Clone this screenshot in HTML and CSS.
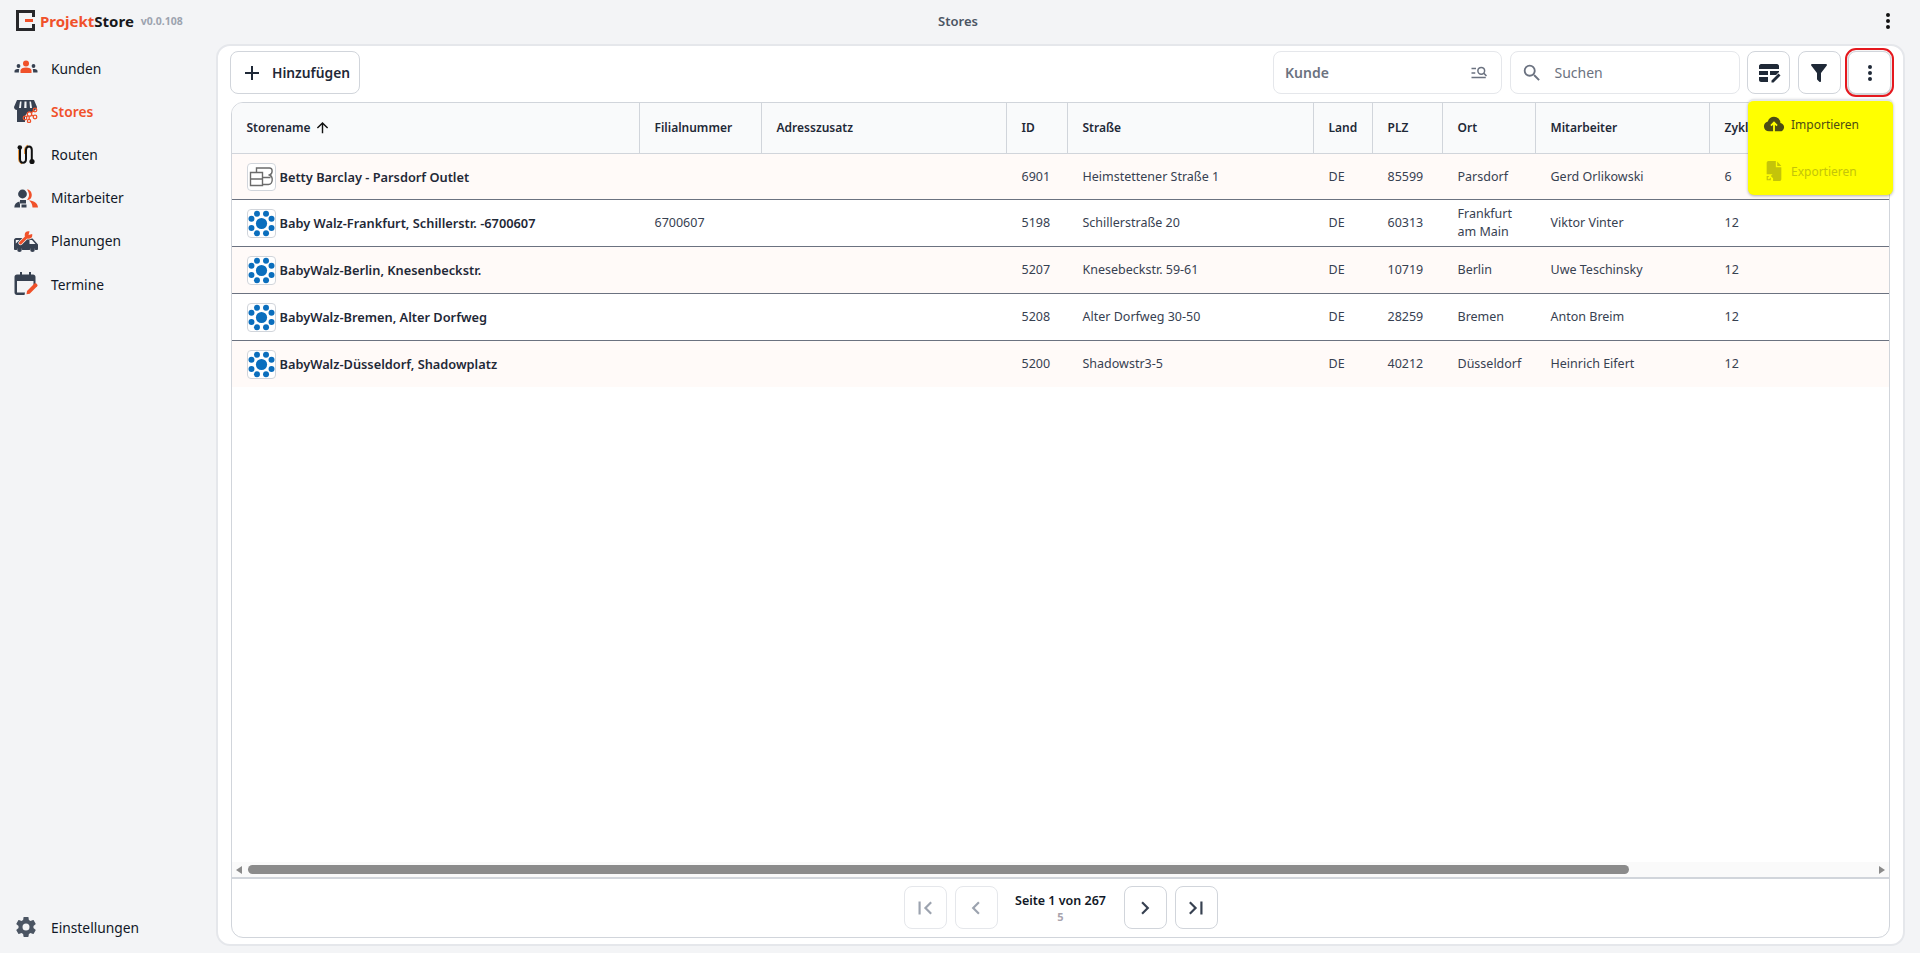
FILE: index.html
```html
<!DOCTYPE html>
<html lang="de">
<head>
    <meta charset="UTF-8" />
    <title>Stores</title>
    <link rel="stylesheet" href="styles.css">
</head>
<body>

<!-- ===== TOP BAR ===== -->
<header class="topbar">
    <div class="brand">
        <svg class="brand-logo" viewBox="0 0 19 21">
            <path fill="#27272a" d="M0 0H19V7H16V3H3V18H16V14H19V21H0Z"/>
            <rect fill="#f0512a" x="9" y="9" width="8" height="3"/>
        </svg>
        <span class="brand-name"><span class="accent">Projekt</span>Store</span>
        <span class="brand-version">v0.0.108</span>
    </div>
    <div class="topbar-title">Stores</div>
    <button class="topbar-menu" aria-label="Menü">
        <svg class="icon-md" viewBox="0 0 24 24"><path d="M12,16A2,2 0 0,1 14,18A2,2 0 0,1 12,20A2,2 0 0,1 10,18A2,2 0 0,1 12,16M12,10A2,2 0 0,1 14,12A2,2 0 0,1 12,14A2,2 0 0,1 10,12A2,2 0 0,1 12,10M12,4A2,2 0 0,1 14,6A2,2 0 0,1 12,8A2,2 0 0,1 10,6A2,2 0 0,1 12,4Z"/></svg>
    </button>
</header>

<div class="shell">
    <!-- ===== SIDEBAR ===== -->
    <aside class="sidebar">
        <a class="side-link">
            <svg class="side-icon" viewBox="0 0 24 24">
                <circle cx="12" cy="7.5" r="3" fill="#f0512a"/>
                <path fill="#f0512a" d="M6.5 17V14.5C6.5 12.5 9 11.5 12 11.5S17.5 12.5 17.5 14.5V17Z"/>
                <g fill="#374151">
                    <circle cx="4.5" cy="10" r="1.9"/>
                    <path d="M.5 16.5V15C.5 13.6 2.5 13 4.5 13L5.3 13.2C5 13.8 4.9 14.4 4.9 15V16.5Z"/>
                    <circle cx="19.5" cy="10" r="1.9"/>
                    <path d="M23.5 16.5V15C23.5 13.6 21.5 13 19.5 13L18.7 13.2C19 13.8 19.1 14.4 19.1 15V16.5Z"/>
                </g>
            </svg>
            <span>Kunden</span>
        </a>
        <a class="side-link active">
            <svg class="side-icon" viewBox="0 0 24 24">
                <path fill="#374151" d="M3 1H20L23 8C23 10 21.5 11 20.5 11V13H14L11 17V23H3V11C1.5 11 0 10 0 8Z"/>
                <path fill="#f3f4f6" d="M6 2.5H7.5L7 9H5ZM10.5 2.5H12.5V9H10.2ZM15.5 2.5H17L18 9H16Z"/>
                <g fill="none" stroke="#f0512a" stroke-width="1.3">
                    <circle cx="21" cy="11" r="1.8"/>
                    <circle cx="15.5" cy="15" r="2.2"/>
                    <circle cx="21" cy="18" r="1.8"/>
                    <circle cx="11" cy="19" r="1.8"/>
                    <circle cx="15" cy="22" r="1.6"/>
                    <path d="M17.2 13.8 19.6 12M17.5 16 19.5 17.2M13.7 16.7 12.2 18M15.2 17.2V20.4"/>
                </g>
            </svg>
            <span>Stores</span>
        </a>
        <a class="side-link">
            <svg class="side-icon" viewBox="0 0 24 24">
                <path fill="none" stroke="#f0912a" stroke-width="1" d="M4.6 8V17C4.6 19.5 6 21.5 8 21.8M10.6 12V8C10.6 5.5 12 3.5 14 3.2"/>
                <path fill="none" stroke="#111" stroke-width="2" d="M6 5V17C6 19.5 7.5 20.8 9 20.8S12 19.5 12 17V8C12 6 13 4.5 15 4.5S17.8 6 17.8 8V19"/>
                <circle cx="5.8" cy="5.5" r="2.3" fill="#111"/>
                <circle cx="18" cy="19.5" r="2.6" fill="#111"/>
            </svg>
            <span>Routen</span>
        </a>
        <a class="side-link">
            <svg class="side-icon" viewBox="0 0 24 24">
                <path fill="#f0512a" d="M13 3.5C16 3.5 17.8 6 17.8 9S16 14 13 14C14.5 12 15 10.5 15 9S14.5 5.5 13 3.5Z"/>
                <path fill="#f0512a" d="M15 14.5C19 14.5 24 17 24 21.5H18.5C18.5 19 17.5 16.5 15 14.5Z"/>
                <circle cx="8.5" cy="8" r="4.4" fill="#374151"/>
                <path fill="#374151" d="M6 14H12V17.5H6Z"/>
                <path fill="#374151" d="M7.5 18.5H12.5V21.5H7.5Z"/>
                <path fill="#374151" d="M5.5 15.5C2.5 16 .3 18 .3 21.5H6V18.5Z"/>
            </svg>
            <span>Mitarbeiter</span>
        </a>
        <a class="side-link">
            <svg class="side-icon" viewBox="0 0 24 24">
                <path fill="#374151" d="M2 9H17C18 9 18.5 9.5 19 10L24 15.5V20C24 20.5 23.5 21 23 21H21.3A3 3 0 0 0 15.7 21H8.3A3 3 0 0 0 2.7 21H1C.5 21 0 20.5 0 20V11C0 10 1 9 2 9Z"/>
                <path fill="#f3f4f6" d="M1.8 11H5.5L1.8 14.5ZM15.5 11H18L21.5 15H15.5Z"/>
                <circle cx="5.5" cy="20.8" r="2.3" fill="#374151"/>
                <circle cx="18.5" cy="20.8" r="2.3" fill="#374151"/>
                <path stroke="#f3f4f6" stroke-width="4.4" stroke-linecap="round" d="M6.5 14 12.5 8"/>
                <circle cx="14.5" cy="6" r="4.6" fill="#f3f4f6"/>
                <path stroke="#f0512a" stroke-width="3" stroke-linecap="round" d="M6.5 14 12.5 8"/>
                <circle cx="14.5" cy="6" r="3.8" fill="#f0512a"/>
                <path fill="#f3f4f6" d="M14.5 6 16 .8 20 4.5Z"/>
            </svg>
            <span>Planungen</span>
        </a>
        <a class="side-link">
            <svg class="side-icon" viewBox="0 0 24 24">
                <path fill="#374151" d="M6 0H8V2.5H15V0H17V2.5H19C20.5 2.5 21.5 3.5 21.5 5V14L19.5 16V9H3V20.5H11L10.5 23H3C1.5 23 .5 22 .5 20.5V5C.5 3.5 1.5 2.5 3 2.5H6Z"/>
                <path fill="#f0512a" d="M13 19 20.5 11.5C21 11 21.7 11 22.2 11.5L23.2 12.5C23.7 13 23.7 13.7 23.2 14.2L15.7 21.7 12.5 22.3Z"/>
            </svg>
            <span>Termine</span>
        </a>
        <a class="side-link side-bottom">
            <svg class="side-icon" viewBox="0 0 24 24"><path fill="#4b5563" d="M12,15.5A3.5,3.5 0 0,1 8.5,12A3.5,3.5 0 0,1 12,8.5A3.5,3.5 0 0,1 15.5,12A3.5,3.5 0 0,1 12,15.5M19.43,12.97C19.47,12.65 19.5,12.33 19.5,12C19.5,11.67 19.47,11.34 19.43,11L21.54,9.37C21.73,9.22 21.78,8.95 21.66,8.73L19.66,5.27C19.54,5.05 19.27,4.96 19.05,5.05L16.56,6.05C16.04,5.66 15.5,5.32 14.87,5.07L14.5,2.42C14.46,2.18 14.25,2 14,2H10C9.75,2 9.54,2.18 9.5,2.42L9.13,5.07C8.5,5.32 7.96,5.66 7.44,6.05L4.95,5.05C4.73,4.96 4.46,5.05 4.34,5.27L2.34,8.73C2.21,8.95 2.27,9.22 2.46,9.37L4.57,11C4.53,11.34 4.5,11.67 4.5,12C4.5,12.33 4.53,12.65 4.57,12.97L2.46,14.63C2.27,14.78 2.21,15.05 2.34,15.27L4.34,18.73C4.46,18.95 4.73,19.03 4.95,18.95L7.44,17.94C7.96,18.34 8.5,18.68 9.13,18.93L9.5,21.58C9.54,21.82 9.75,22 10,22H14C14.25,22 14.46,21.82 14.5,21.58L14.87,18.93C15.5,18.67 16.04,18.34 16.56,17.94L19.05,18.95C19.27,19.03 19.54,18.95 19.66,18.73L21.66,15.27C21.78,15.05 21.73,14.78 21.54,14.63L19.43,12.97Z"/></svg>
            <span>Einstellungen</span>
        </a>
    </aside>

    <!-- ===== MAIN CARD ===== -->
    <main class="card">
        <div class="toolbar">
            <button class="btn btn-add">
                <svg class="icon-md" viewBox="0 0 24 24"><path d="M19,13H13V19H11V13H5V11H11V5H13V11H19V13Z"/></svg>
                Hinzufügen
            </button>
            <div class="toolbar-right">
                <div class="field field-customer">
                    <span class="field-label">Kunde</span>
                    <svg class="icon-field" viewBox="0 0 24 24">
                        <path fill="none" stroke="#6b7280" stroke-width="2" d="M2 6H8M2 12H7M2 18H21"/>
                        <circle cx="15" cy="9" r="4.5" fill="none" stroke="#6b7280" stroke-width="2"/>
                        <path stroke="#6b7280" stroke-width="2" d="M18.2 12.2 22 16"/>
                    </svg>
                </div>
                <div class="field field-search">
                    <svg class="icon-search" viewBox="0 0 24 24"><path d="M9.5,3A6.5,6.5 0 0,1 16,9.5C16,11.11 15.41,12.59 14.44,13.73L14.71,14H15.5L20.5,19L19,20.5L14,15.5V14.71L13.73,14.44C12.59,15.41 11.11,16 9.5,16A6.5,6.5 0 0,1 3,9.5A6.5,6.5 0 0,1 9.5,3M9.5,5C7,5 5,7 5,9.5C5,12 7,14 9.5,14C12,14 14,12 14,9.5C14,7 12,5 9.5,5Z"/></svg>
                    <span class="field-label">Suchen</span>
                </div>
                <button class="btn btn-icon" aria-label="Spalten">
                    <svg class="icon-md" viewBox="0 0 24 24"><path d="M4 3H20C21 3 22 4 22 5V8H2V5C2 4 3 3 4 3ZM2 10H11V14H2ZM13 10H22V11L19 14H13ZM2 16H11V21H4C3 21 2 20 2 19ZM21.5 12.5 23.5 14.5 16.5 21.5H14.5V19.5Z"/></svg>
                </button>
                <button class="btn btn-icon" aria-label="Filter">
                    <svg class="icon-md" viewBox="0 0 24 24"><path d="M14,12V19.88C14.04,20.18 13.94,20.5 13.71,20.71C13.32,21.1 12.69,21.1 12.3,20.71L10.29,18.7C10.06,18.47 9.96,18.16 10,17.87V12H9.97L4.21,4.62C3.87,4.19 3.95,3.56 4.38,3.22C4.57,3.08 4.78,3 5,3V3H19V3C19.22,3 19.43,3.08 19.62,3.22C20.05,3.56 20.13,4.19 19.79,4.62L14.03,12H14Z"/></svg>
                </button>
                <button class="btn btn-icon btn-marked" aria-label="Mehr">
                    <svg class="icon-md" viewBox="0 0 24 24"><path d="M12,16A2,2 0 0,1 14,18A2,2 0 0,1 12,20A2,2 0 0,1 10,18A2,2 0 0,1 12,16M12,10A2,2 0 0,1 14,12A2,2 0 0,1 12,14A2,2 0 0,1 10,12A2,2 0 0,1 12,10M12,4A2,2 0 0,1 14,6A2,2 0 0,1 12,8A2,2 0 0,1 10,6A2,2 0 0,1 12,4Z"/></svg>
                </button>
            </div>

            <!-- dropdown of the three dots button -->
            <div class="menu">
                <div class="menu-item">
                    <svg class="icon-menu" viewBox="0 0 24 24"><path d="M11 20H6.5Q4.22 20 2.61 18.43 1 16.85 1 14.58 1 12.63 2.17 11.1 3.35 9.57 5.25 9.15 5.88 6.85 7.75 5.43 9.63 4 12 4 14.93 4 16.96 6.04 19 8.07 19 11 20.73 11.2 21.86 12.5 23 13.78 23 15.5 23 17.38 21.69 18.69 20.38 20 18.5 20H13V12.85L14.6 14.4L16 13L12 9L8 13L9.4 14.4L11 12.85Z"/></svg>
                    <span>Importieren</span>
                </div>
                <div class="menu-item disabled">
                    <svg class="icon-menu" viewBox="0 0 24 24"><path d="M6 1H14V8H20V21C20 22 19 23 18 23H11V20L8.5 17.5 10.5 15.5H4V3C4 2 5 1 6 1ZM15.5 1.5 20 6.5H15.5ZM4 17.5H7L4.8 19.7 6.3 21.2 8.5 19V22H4Z"/></svg>
                    <span>Exportieren</span>
                </div>
            </div>
        </div>

        <div class="table-box">
            <div class="table-scroll">
                <table class="stores">
                    <colgroup>
                        <col class="c-name"><col class="c-branch"><col class="c-extra"><col class="c-id"><col class="c-street">
                        <col class="c-land"><col class="c-zip"><col class="c-city"><col class="c-staff"><col class="c-cycle">
                    </colgroup>
                    <thead>
                    <tr>
                        <th>
                            <span class="sort">Storename
                                <svg class="icon-sort" viewBox="0 0 24 24"><path d="M13,20H11V8L5.5,13.5L4.08,12.08L12,4.16L19.92,12.08L18.5,13.5L13,8V20Z"/></svg>
                            </span>
                        </th>
                        <th>Filialnummer</th><th>Adresszusatz</th><th>ID</th><th>Straße</th>
                        <th>Land</th><th>PLZ</th><th>Ort</th><th>Mitarbeiter</th><th>Zyklus</th>
                    </tr>
                    </thead>
                    <tbody>
                    <tr class="first">
                        <td class="store">
                            <span class="store-cell">
                                <span class="logo logo-short">
                                    <svg viewBox="0 0 27 26"><g fill="none" stroke="#6b6b6b" stroke-width="1.4"><path d="M2.5 8.5H14.5V21.5H2.5ZM2.5 15H14.5"/><path d="M8.5 8.5V4H21.5C25 4 25 9.5 21.5 11 25.5 12.5 25 20.5 20.5 20.5H14.5M14.5 13.5H22.5"/></g></svg>
                                </span>
                                Betty Barclay - Parsdorf Outlet
                            </span>
                        </td>
                        <td></td><td></td><td>6901</td><td>Heimstettener Straße 1</td><td>DE</td><td>85599</td><td>Parsdorf</td><td>Gerd Orlikowski</td><td>6</td>
                    </tr>
                    <tr>
                        <td class="store"><span class="store-cell"><span class="logo"><svg viewBox="0 0 28 28"><use href="#walz"/></svg></span>Baby Walz-Frankfurt, Schillerstr. -6700607</span></td>
                        <td>6700607</td><td></td><td>5198</td><td>Schillerstraße 20</td><td>DE</td><td>60313</td><td>Frankfurt am Main</td><td>Viktor Vinter</td><td>12</td>
                    </tr>
                    <tr>
                        <td class="store"><span class="store-cell"><span class="logo"><svg viewBox="0 0 28 28"><use href="#walz"/></svg></span>BabyWalz-Berlin, Knesenbeckstr.</span></td>
                        <td></td><td></td><td>5207</td><td>Knesebeckstr. 59-61</td><td>DE</td><td>10719</td><td>Berlin</td><td>Uwe Teschinsky</td><td>12</td>
                    </tr>
                    <tr>
                        <td class="store"><span class="store-cell"><span class="logo"><svg viewBox="0 0 28 28"><use href="#walz"/></svg></span>BabyWalz-Bremen, Alter Dorfweg</span></td>
                        <td></td><td></td><td>5208</td><td>Alter Dorfweg 30-50</td><td>DE</td><td>28259</td><td>Bremen</td><td>Anton Breim</td><td>12</td>
                    </tr>
                    <tr class="last">
                        <td class="store"><span class="store-cell"><span class="logo"><svg viewBox="0 0 28 28"><use href="#walz"/></svg></span>BabyWalz-Düsseldorf, Shadowplatz</span></td>
                        <td></td><td></td><td>5200</td><td>Shadowstr3-5</td><td>DE</td><td>40212</td><td>Düsseldorf</td><td>Heinrich Eifert</td><td>12</td>
                    </tr>
                    </tbody>
                </table>
            </div>

            <!-- horizontal scrollbar -->
            <div class="hbar">
                <span class="hbar-arrow left"></span>
                <div class="hbar-track"><div class="hbar-thumb"></div></div>
                <span class="hbar-arrow right"></span>
            </div>

            <div class="pager">
                <button class="btn btn-page" disabled aria-label="Erste Seite">
                    <svg class="icon-page" viewBox="0 0 24 24"><path d="M18.41,16.59L13.82,12L18.41,7.41L17,6L11,12L17,18L18.41,16.59M6,6H8V18H6V6Z"/></svg>
                </button>
                <button class="btn btn-page" disabled aria-label="Zurück">
                    <svg class="icon-page" viewBox="0 0 24 24"><path d="M15.41,16.58L10.83,12L15.41,7.41L14,6L8,12L14,18L15.41,16.58Z"/></svg>
                </button>
                <div class="pager-info">
                    <div class="pager-text">Seite 1 von 267</div>
                    <div class="pager-count">5</div>
                </div>
                <button class="btn btn-page" aria-label="Weiter">
                    <svg class="icon-page" viewBox="0 0 24 24"><path d="M8.59,16.58L13.17,12L8.59,7.41L10,6L16,12L10,18L8.59,16.58Z"/></svg>
                </button>
                <button class="btn btn-page" aria-label="Letzte Seite">
                    <svg class="icon-page" viewBox="0 0 24 24"><path d="M5.59,7.41L10.18,12L5.59,16.59L7,18L13,12L7,6L5.59,7.41M16,6H18V18H16V6Z"/></svg>
                </button>
            </div>
        </div>
    </main>
</div>

<!-- shared logo -->
<svg class="defs" aria-hidden="true">
    <symbol id="walz" viewBox="0 0 28 28">
        <g fill="#0a6ebd">
            <circle cx="14" cy="14" r="5.8"/>
            <circle cx="9.3" cy="3.8" r="3.1"/><circle cx="18.7" cy="3.8" r="3.1"/>
            <circle cx="3.6" cy="9" r="3.1"/><circle cx="24.4" cy="9" r="3.1"/>
            <circle cx="3.6" cy="18.6" r="3.1"/><circle cx="24.4" cy="18.6" r="3.1"/>
            <circle cx="9.3" cy="24.2" r="3.1"/><circle cx="18.7" cy="24.2" r="3.1"/>
        </g>
    </symbol>
</svg>

</body>
</html>
```

FILE: styles.css
```css
* { box-sizing: border-box; }

html, body {
    height: 100%;
}
body {
    margin: 0;
    display: flex;
    flex-direction: column;
    overflow: hidden;
    background: #f3f4f6;
    color: #111827;
    font-family: "Noto Sans", "Open Sans", sans-serif;
    font-size: 13px;
}
svg { display: block; fill: currentColor; }
.defs { width: 0; height: 0; position: absolute; }

/* ────────── Top bar ────────── */
.topbar {
    height: 44px;
    flex: none;
    display: grid;
    grid-template-columns: 1fr auto 1fr;
    align-items: center;
    padding: 0 20px 3px 16px;
}
.brand {
    display: flex;
    align-items: center;
}
.brand-logo { width: 19px; height: 21px; margin-right: 5px; }
.brand-name {
    font-size: 15px;
    font-weight: 700;
    color: #18181b;
}
.brand-name .accent { color: #f0512a; }
.brand-version {
    margin-left: 7px;
    font-size: 10.5px;
    font-weight: 700;
    color: #9ca3af;
}
.topbar-title {
    font-size: 13px;
    font-weight: 600;
    color: #4b5563;
}
.topbar-menu {
    justify-self: end;
    border: none;
    background: none;
    padding: 0;
    color: #111;
}
.icon-md { width: 24px; height: 24px; }

/* ────────── Layout ────────── */
.shell {
    flex: 1;
    min-height: 0;
    display: flex;
}
.sidebar {
    width: 216px;
    flex: none;
    display: flex;
    flex-direction: column;
    padding: 2.5px 0 4px 14px;
}
.side-link {
    height: 43.2px;
    flex: none;
    display: flex;
    align-items: center;
    gap: 13px;
    font-size: 13.8px;
    color: #111827;
}
.side-link.active {
    color: #f0512a;
    font-weight: 600;
}
.side-bottom { margin-top: auto; }
.side-icon { width: 24px; height: 24px; flex: none; }

.card {
    width: 1689px;
    flex: none;
    min-height: 0;
    margin-bottom: 7px;
    display: flex;
    flex-direction: column;
    gap: 8px;
    padding: 5px 13px 6px;
    background: #fff;
    border: 2px solid #e5e7eb;
    border-radius: 14px;
}

/* ────────── Toolbar ────────── */
.toolbar {
    position: relative;
    flex: none;
    height: 43px;
    display: flex;
    justify-content: space-between;
    margin: 0 -1px;
}
.toolbar-right {
    display: flex;
    gap: 7.5px;
}
.btn {
    display: flex;
    align-items: center;
    justify-content: center;
    background: #fff;
    border: 1px solid #d1d5db;
    border-radius: 8px;
    color: #1f2937;
    font-family: inherit;
    padding: 0;
}
.btn-add {
    width: 130px;
    gap: 8px;
    font-size: 13.8px;
    font-weight: 600;
}
.btn-icon { width: 43px; height: 43px; }
.btn-marked {
    outline: 2px solid #e5181e;
    outline-offset: 1px;
    box-shadow: 0 1px 3px rgba(0,0,0,.25);
}
.field {
    display: flex;
    align-items: center;
    height: 43px;
    border: 1px solid #e5e7eb;
    border-radius: 8px;
    background: #fff;
    font-size: 14px;
    color: #6b7280;
}
.field-customer {
    width: 229px;
    justify-content: space-between;
    padding: 0 13px 0 11px;
    font-weight: 600;
}
.field-search {
    width: 230px;
    gap: 12px;
    padding-left: 10px;
}
.icon-field { width: 18px; height: 18px; }
.icon-search { width: 22px; height: 22px; color: #6b7280; }

.menu {
    position: absolute;
    top: 48px;
    right: -2px;
    z-index: 10;
    width: 145px;
    background: #ff0;
    border-top: 2px solid #e5e7eb;
    border-radius: 6px;
    box-shadow: 0 1px 3px rgba(0,0,0,.3);
}
.menu-item {
    height: 47px;
    display: flex;
    align-items: center;
    gap: 6px;
    padding: 0 0 1px 15px;
    font-size: 12px;
    color: #4d4d14;
}
.menu-item.disabled { color: #c4c40a; }
.icon-menu { width: 22px; height: 22px; flex: none; }

/* ────────── Table ────────── */
.table-box {
    flex: 1;
    min-height: 0;
    display: flex;
    flex-direction: column;
    border: 1px solid #d1d5db;
    border-radius: 12px;
    overflow: hidden;
}
.table-scroll {
    flex: 1;
    min-height: 0;
    overflow: hidden;
}
.stores {
    table-layout: fixed;
    width: 1966px;
    border-collapse: separate;
    border-spacing: 0;
}
.c-name { width: 408px; }
.c-branch { width: 122px; }
.c-extra { width: 245px; }
.c-id { width: 61px; }
.c-street { width: 246px; }
.c-land { width: 59px; }
.c-zip { width: 70px; }
.c-city { width: 93px; }
.c-staff { width: 174px; }
.c-cycle { width: 488px; }

.stores th {
    height: 51px;
    padding: 0 14.5px 2px;
    text-align: left;
    font-size: 12px;
    font-weight: 600;
    color: #1f2937;
    background: #f9fafb;
    border-right: 1px solid #d1d5db;
    border-bottom: 1px solid #d1d5db;
}
.sort {
    display: flex;
    align-items: center;
    gap: 3px;
}
.icon-sort { width: 17px; height: 17px; color: #111; }

.stores td {
    height: 47px;
    padding: 0 14.5px;
    font-size: 12.5px;
    line-height: 18px;
    color: #374151;
    border-bottom: 1px solid #6b7280;
}
.stores tr.first td { height: 46px; }
.stores tbody tr:nth-child(odd) td { background: #fffaf8; }
.stores tr.last td { border-bottom: none; height: 46px; }
.stores td.store {
    font-size: 12.8px;
    font-weight: 600;
    color: #1f2937;
}
.store-cell {
    display: flex;
    align-items: center;
    gap: 4px;
}
.logo {
    width: 29px;
    height: 29px;
    flex: none;
    padding: 0;
    display: block;
    background: #fff;
    border: 1px solid #d1d5db;
    border-radius: 4px;
}
.logo-short { height: 28px; }
.logo svg { width: 27px; height: 27px; }
.logo-short svg { height: 26px; }

/* ────────── Scrollbar ────────── */
.hbar {
    flex: none;
    height: 15px;
    display: flex;
    align-items: center;
    justify-content: space-between;
    padding: 0 4px;
    background: #fafafa;
}
.hbar-arrow {
    width: 0;
    height: 0;
    border-top: 4.5px solid transparent;
    border-bottom: 4.5px solid transparent;
}
.hbar-arrow.left { border-right: 6px solid #8b8b8b; }
.hbar-arrow.right { border-left: 6px solid #8b8b8b; }
.hbar-track {
    flex: 1;
    padding: 0 250px 0 6px;
}
.hbar-thumb {
    height: 9px;
    border-radius: 5px;
    background: #8b8b8b;
}

/* ────────── Pagination ────────── */
.pager {
    flex: none;
    height: 60px;
    display: flex;
    justify-content: center;
    align-items: flex-start;
    gap: 8px;
    padding-top: 7px;
    border-top: 2px solid #d1d5db;
}
.btn-page {
    width: 43px;
    height: 43px;
    color: #374151;
}
.btn-page:disabled {
    border-color: #e5e7eb;
    color: #9ca3af;
}
.icon-page { width: 26px; height: 26px; }
.pager-info {
    width: 110px;
    text-align: center;
    padding-top: 6px;
}
.pager-text {
    font-size: 12.5px;
    font-weight: 600;
    line-height: 18px;
    color: #111827;
}
.pager-count {
    font-size: 11px;
    font-weight: 700;
    line-height: 14px;
    color: #a8a3ad;
}
```
